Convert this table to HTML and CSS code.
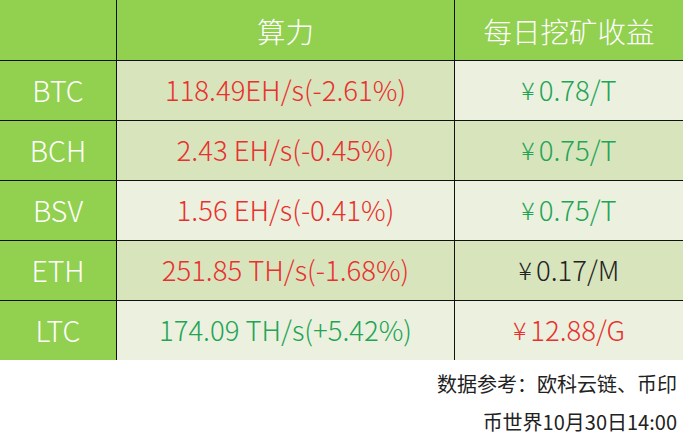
FILE: index.html
```html
<!DOCTYPE html>
<html lang="zh">
<head>
<meta charset="utf-8">
<link rel="stylesheet" href="styles.css">
</head>
<body>
<div class="table">
  <div class="cell head"></div>
  <div class="cell head">算力</div>
  <div class="cell head">每日挖矿收益</div>

  <div class="cell coin">BTC</div>
  <div class="cell dark red">118.49EH/s(-2.61%)</div>
  <div class="cell light green"><span class="yen">¥</span>0.78/T</div>

  <div class="cell coin">BCH</div>
  <div class="cell dark red">2.43 EH/s(-0.45%)</div>
  <div class="cell dark green"><span class="yen">¥</span>0.75/T</div>

  <div class="cell coin">BSV</div>
  <div class="cell light red">1.56 EH/s(-0.41%)</div>
  <div class="cell light green"><span class="yen">¥</span>0.75/T</div>

  <div class="cell coin">ETH</div>
  <div class="cell dark red">251.85 TH/s(-1.68%)</div>
  <div class="cell dark black"><span class="yen">¥</span>0.17/M</div>

  <div class="cell coin">LTC</div>
  <div class="cell light green">174.09 TH/s(+5.42%)</div>
  <div class="cell light red"><span class="yen">¥</span>12.88/G</div>
</div>
<div class="footer">
  <p>数据参考：欧科云链、币印</p>
  <p>币世界10月30日14:00</p>
</div>
</body>
</html>
```
FILE: styles.css
```css
body {
  margin: 0;
  background: #fff;
  font-family: "Noto Sans CJK SC", sans-serif;
}
.table {
  width: 683px;
  display: grid;
  grid-template-columns: 116px 337px 228px;
  grid-template-rows: 60px repeat(5, 59px);
  gap: 1px;
  background: #111;
}
.cell {
  display: flex;
  align-items: center;
  justify-content: center;
  font-size: 27.5px;
  font-weight: 300;
  padding-bottom: 3px;
}
.head {
  background: #92d050;
  color: #fff;
  font-size: 28.5px;
  padding-bottom: 0;
}
.coin {
  background: #92d050;
  color: #fff;
  font-size: 28.5px;
}
.yen {
  margin-right: 4px;
  font-size: 25px;
}
.dark { background: #d8e4bc; }
.light { background: #ebf1de; }
.red { color: #e8312f; }
.green { color: #23a455; }
.black { color: #222; }
.footer {
  width: 677px;
  text-align: right;
  font-size: 20px;
  color: #222;
}
.footer p {
  margin: 9px 0 0;
  line-height: 29px;
}
```
